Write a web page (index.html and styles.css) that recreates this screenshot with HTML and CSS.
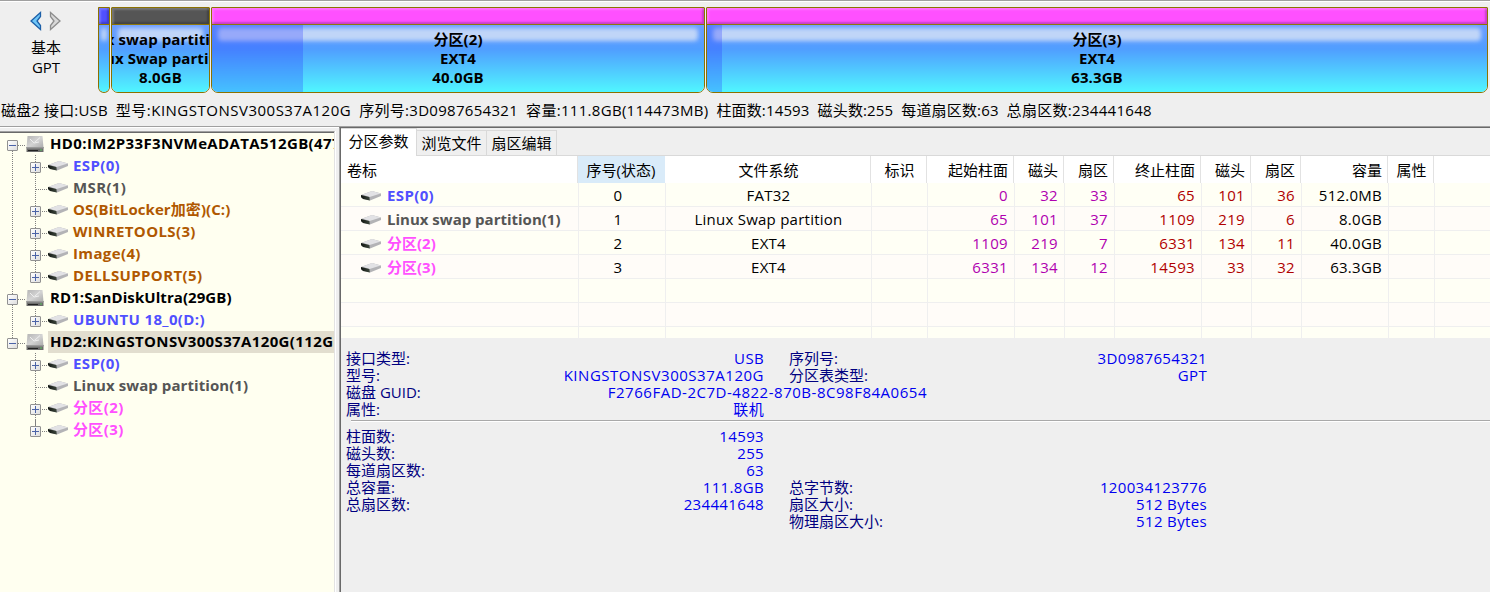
FILE: index.html
```html
<!DOCTYPE html>
<html lang="zh-CN">
<head>
    <meta charset="UTF-8">
    <title>磁盘分区管理</title>
    <link rel="stylesheet" href="styles.css">
</head>
<body>
    <!-- shared icons -->
    <svg class="defs" width="0" height="0">
        <defs>
            <linearGradient id="metal" x1="0" y1="0" x2="1" y2="1">
                <stop offset="0" stop-color="#b4b4b4"/>
                <stop offset="0.5" stop-color="#d4d4d4"/>
                <stop offset="1" stop-color="#aaaaaa"/>
            </linearGradient>
            <linearGradient id="side" x1="0" y1="0" x2="1" y2="0">
                <stop offset="0" stop-color="#111611"/>
                <stop offset="1" stop-color="#3c463c"/>
            </linearGradient>
            <symbol id="vol" viewBox="0 0 20 12">
                <path d="M0 5 L11 1 L20 3.5 L20 6 L9 10.5 L0 8 Z" fill="#b3b3b6"/>
                <path d="M1.5 4.4 L11 1 L19.7 3.5 L8.6 7 Z" fill="#e2e2e5"/>
                <path d="M0 5 L8.4 7 L8.8 10.5 L2 9 L0 7 Z" fill="url(#side)"/>
            </symbol>
            <symbol id="disk" viewBox="0 0 18 18">
                <path d="M1.5 1 H16.5 L17.5 13 H0.5 Z" fill="url(#metal)"/>
                <path d="M9 7 L14 2.5 M4 4 L8 8 L13 7" stroke="#eeeeee" stroke-width="1" fill="none"/>
                <path d="M0.5 12 H17.5 V17 H0.5 Z" fill="#6c6c6c"/>
                <path d="M0.5 12 H17.5 V13.5 H0.5 Z" fill="#9a9a9a"/>
                <path d="M2 15.5 H12" stroke="#222222"/>
                <path d="M14 15 H16" stroke="#59c45d"/>
            </symbol>
        </defs>
    </svg>

    <div class="top">
        <div class="disk-nav">
            <div class="arrows">
                <svg width="12" height="20" viewBox="0 0 12 20"><path d="M10.5 1.5 V5.5 L7 10 L10.5 14.5 V18.5 L1 10 Z" fill="#6fc6f8" stroke="#1c5fa8" stroke-width="1.3"/></svg>
                <svg width="12" height="20" viewBox="0 0 12 20"><path d="M1.5 1.5 V5.5 L5 10 L1.5 14.5 V18.5 L11 10 Z" fill="#d8d8d8" stroke="#8d8d8d" stroke-width="1.3"/></svg>
            </div>
            <div>基本</div>
            <div class="gpt">GPT</div>
        </div>
        <div class="bars">
            <div class="part esp"><div class="cap"></div><div class="body"></div></div>
            <div class="part swap"><div class="cap"></div><div class="body"><span>Linux swap partition(1)</span><span>Linux Swap partition</span><span>8.0GB</span></div></div>
            <div class="part p2"><div class="cap"></div><div class="body"><i class="used"></i><span>分区(2)</span><span>EXT4</span><span>40.0GB</span></div></div>
            <div class="part p3"><div class="cap"></div><div class="body"><i class="used"></i><span>分区(3)</span><span>EXT4</span><span>63.3GB</span></div></div>
        </div>
    </div>

    <div class="info">
        <span>磁盘2 接口:USB</span>
        <span class="model">型号:KINGSTONSV300S37A120G</span>
        <span class="wide">序列号:3D0987654321</span>
        <span class="wide">容量:111.8GB(114473MB)</span>
        <span>柱面数:14593</span>
        <span>磁头数:255</span>
        <span>每道扇区数:63</span>
        <span class="wide">总扇区数:234441648</span>
    </div>

    <div class="main">
        <div class="tree">
            <div class="node root first"><b class="box"></b><svg class="disk"><use href="#disk"/></svg><span>HD0:IM2P33F3NVMeADATA512GB(477GB)</span></div>
            <div class="node sub blue"><b class="box plus"></b><svg class="vol"><use href="#vol"/></svg><span>ESP(0)</span></div>
            <div class="node sub gray"><svg class="vol"><use href="#vol"/></svg><span>MSR(1)</span></div>
            <div class="node sub brown tight"><b class="box plus"></b><svg class="vol"><use href="#vol"/></svg><span>OS(BitLocker加密)(C:)</span></div>
            <div class="node sub brown"><b class="box plus"></b><svg class="vol"><use href="#vol"/></svg><span>WINRETOOLS(3)</span></div>
            <div class="node sub brown"><b class="box plus"></b><svg class="vol"><use href="#vol"/></svg><span>Image(4)</span></div>
            <div class="node sub brown end"><b class="box plus"></b><svg class="vol"><use href="#vol"/></svg><span>DELLSUPPORT(5)</span></div>
            <div class="node root tight"><b class="box"></b><svg class="disk"><use href="#disk"/></svg><span>RD1:SanDiskUltra(29GB)</span></div>
            <div class="node sub blue end"><b class="box plus"></b><svg class="vol"><use href="#vol"/></svg><span>UBUNTU 18_0(D:)</span></div>
            <div class="node root last selected"><b class="box"></b><svg class="disk"><use href="#disk"/></svg><span>HD2:KINGSTONSV300S37A120G(112GB)</span></div>
            <div class="node sub blue nl"><b class="box plus"></b><svg class="vol"><use href="#vol"/></svg><span>ESP(0)</span></div>
            <div class="node sub gray nl tight"><svg class="vol"><use href="#vol"/></svg><span>Linux swap partition(1)</span></div>
            <div class="node sub pink nl"><b class="box plus"></b><svg class="vol"><use href="#vol"/></svg><span>分区(2)</span></div>
            <div class="node sub pink nl end"><b class="box plus"></b><svg class="vol"><use href="#vol"/></svg><span>分区(3)</span></div>
        </div>

        <div class="content">
            <div class="tabs">
                <div class="tab active">分区参数</div>
                <div class="tab">浏览文件</div>
                <div class="tab">扇区编辑</div>
            </div>
            <div class="grid">
                <table>
                    <colgroup>
                        <col class="c1"><col class="c2"><col class="c3"><col class="c4"><col class="c5"><col class="c6"><col class="c6">
                        <col class="c5"><col class="c6"><col class="c6"><col class="c5"><col class="c7"><col>
                    </colgroup>
                    <thead>
                        <tr><th class="l">卷标</th><th class="sort">序号(状态)</th><th>文件系统</th><th>标识</th><th class="r">起始柱面</th><th class="r">磁头</th><th class="r">扇区</th><th class="r">终止柱面</th><th class="r">磁头</th><th class="r">扇区</th><th class="r">容量</th><th>属性</th><th></th></tr>
                    </thead>
                    <tbody>
                        <tr><td class="name blue"><svg class="vol"><use href="#vol"/></svg>ESP(0)</td><td class="no">0</td><td>FAT32</td><td></td><td class="start">0</td><td class="start">32</td><td class="start">33</td><td class="stop">65</td><td class="stop">101</td><td class="stop">36</td><td class="r">512.0MB</td><td></td><td></td></tr>
                        <tr><td class="name gray"><svg class="vol"><use href="#vol"/></svg>Linux swap partition(1)</td><td class="no">1</td><td>Linux Swap partition</td><td></td><td class="start">65</td><td class="start">101</td><td class="start">37</td><td class="stop">1109</td><td class="stop">219</td><td class="stop">6</td><td class="r">8.0GB</td><td></td><td></td></tr>
                        <tr><td class="name pink"><svg class="vol"><use href="#vol"/></svg>分区(2)</td><td class="no">2</td><td>EXT4</td><td></td><td class="start">1109</td><td class="start">219</td><td class="start">7</td><td class="stop">6331</td><td class="stop">134</td><td class="stop">11</td><td class="r">40.0GB</td><td></td><td></td></tr>
                        <tr><td class="name pink"><svg class="vol"><use href="#vol"/></svg>分区(3)</td><td class="no">3</td><td>EXT4</td><td></td><td class="start">6331</td><td class="start">134</td><td class="start">12</td><td class="stop">14593</td><td class="stop">33</td><td class="stop">32</td><td class="r">63.3GB</td><td></td><td></td></tr>
                        <tr><td></td><td></td><td></td><td></td><td></td><td></td><td></td><td></td><td></td><td></td><td></td><td></td><td></td></tr>
                        <tr><td></td><td></td><td></td><td></td><td></td><td></td><td></td><td></td><td></td><td></td><td></td><td></td><td></td></tr>
                        <tr><td></td><td></td><td></td><td></td><td></td><td></td><td></td><td></td><td></td><td></td><td></td><td></td><td></td></tr>
                    </tbody>
                </table>
            </div>
            <div class="detail">
                <div class="row"><label>接口类型:</label><em>USB</em><label>序列号:</label><em>3D0987654321</em></div>
                <div class="row"><label>型号:</label><em class="id">KINGSTONSV300S37A120G</em><label>分区表类型:</label><em>GPT</em></div>
                <div class="row guid"><label>磁盘 GUID:</label><em class="id">F2766FAD-2C7D-4822-870B-8C98F84A0654</em></div>
                <div class="row"><label>属性:</label><em>联机</em></div>
            </div>
            <div class="line"></div>
            <div class="detail second">
                <div class="row"><label>柱面数:</label><em>14593</em></div>
                <div class="row"><label>磁头数:</label><em>255</em></div>
                <div class="row"><label>每道扇区数:</label><em>63</em></div>
                <div class="row"><label>总容量:</label><em>111.8GB</em><label>总字节数:</label><em>120034123776</em></div>
                <div class="row"><label>总扇区数:</label><em>234441648</em><label>扇区大小:</label><em>512 Bytes</em></div>
                <div class="row"><label></label><em></em><label>物理扇区大小:</label><em>512 Bytes</em></div>
            </div>
        </div>
    </div>
</body>
</html>
```
FILE: styles.css
```css
* {
    box-sizing: border-box;
}
body {
    margin: 0;
    width: 1490px;
    height: 592px;
    overflow: hidden;
    background-color: #efefef;
    color: #000;
    font-family: "Open Sans", "Noto Sans CJK SC", sans-serif;
    font-size: 15px;
    line-height: 20px;
    white-space: nowrap;
    display: flex;
    flex-direction: column;
}
.defs {
    position: absolute;
}
.blue { color: #5050ff; }
.gray { color: #555; }
.brown { color: #b05800; }
.pink { color: #ff50ff; }

/* disk map */
.top {
    height: 99px;
    flex: none;
    display: flex;
    border-top: 1px solid #a0a0a0;
    box-shadow: inset 0 1px #fff;
}
.disk-nav {
    width: 98px;
    padding: 10px 6px 0 0;
    text-align: center;
}
.arrows {
    display: flex;
    justify-content: center;
    gap: 7px;
    height: 26px;
    margin-left: -2px;
}
.bars {
    display: flex;
    gap: 1px;
    padding-top: 6px;
}
.part {
    height: 86px;
    border: 1px solid #8c7200;
    border-radius: 1px 1px 7px 7px;
    overflow: hidden;
}
.esp { width: 12px; }
.swap { width: 99px; }
.p2 { width: 494px; }
.p3 { width: 782px; }
.cap {
    height: 17px;
    border-bottom: 1px solid #8c7200;
    background-color: #ff50ff;
    box-shadow: inset 2px 2px 2px rgba(255, 255, 255, 0.2), inset -2px -2px 2px rgba(0, 0, 0, 0.22);
}
.esp .cap { background-color: #5050ff; }
.swap .cap { background-color: #555; }
.body {
    position: relative;
    height: 67px;
    padding-top: 5px;
    background: linear-gradient(#6c9cff, #509eff 36%, #50f6ff);
    display: flex;
    flex-direction: column;
    align-items: center;
    font-weight: bold;
    line-height: 19px;
    letter-spacing: 0.1px;
}
.body::before {
    content: "";
    position: absolute;
    left: 6px;
    right: 6px;
    top: 3px;
    height: 13px;
    border-radius: 4px;
    background-color: rgba(205, 221, 247, 0.88);
    filter: blur(2px);
}
.esp .body::before {
    left: 2px;
    right: 2px;
}
.body span {
    position: relative;
}
.used {
    position: absolute;
    left: 0;
    top: 0;
    bottom: 0;
    width: 91px;
    background-color: rgba(40, 50, 255, 0.27);
}
.p3 .used {
    width: 15px;
}

.info {
    flex: none;
    height: 28px;
    padding: 1px 0 0 1px;
    display: flex;
    gap: 8px;
    border-bottom: 1px solid #a0a0a0;
    letter-spacing: 0.15px;
}
.info .wide {
    letter-spacing: 0.3px;
}
.info .model {
    letter-spacing: 0.5px;
}

.main {
    flex: 1;
    display: flex;
    min-height: 0;
    box-shadow: inset 0 1px #fff;
}

/* tree */
.tree {
    width: 335px;
    margin: 4px 4px 0 0;
    padding-top: 1px;
    border-top: 1px solid #a0a0a0;
    border-right: 1px solid #e3e3e3;
    background: linear-gradient(#696969, #696969) top / 100% 1px no-repeat #fffff0;
    box-shadow: 1px 0 #fff;
    overflow: hidden;
    font-weight: bold;
    letter-spacing: 0.37px;
}
.tight {
    letter-spacing: 0.07px;
}
.node {
    position: relative;
    height: 22px;
    display: flex;
    align-items: center;
}
.node span {
    height: 22px;
    line-height: 20px;
    padding-left: 5px;
}
.root span {
    flex: 1;
    padding-left: 2px;
    margin-left: 4px;
}
.selected span {
    background-color: #e2decf;
}
.box {
    position: absolute;
    left: 7px;
    top: 7px;
    width: 11px;
    height: 11px;
    border: 1px solid #919191;
    border-radius: 1px;
    background: linear-gradient(#4b63a7, #4b63a7) center / 7px 1px no-repeat, linear-gradient(135deg, #fff, #dedede);
}
.plus {
    left: 30px;
    background: linear-gradient(#4b63a7, #4b63a7) center / 7px 1px no-repeat, linear-gradient(#4b63a7, #4b63a7) center / 1px 7px no-repeat, linear-gradient(135deg, #fff, #dedede);
}
.root .disk {
    width: 18px;
    height: 18px;
    flex: none;
    margin-left: 26px;
}
.vol {
    width: 20px;
    height: 12px;
    flex: none;
}
.node .vol {
    margin-left: 48px;
    margin-bottom: 1px;
}
/* dotted guides */
.node::before, .node::after {
    content: "";
    position: absolute;
}
.node::before {
    left: 12px;
    top: 0;
    width: 1px;
    height: 22px;
    background: repeating-linear-gradient(#808080 0 1px, transparent 1px 2px);
}
.node.first::before { top: 12px; height: 10px; }
.node.last::before { height: 12px; }
.node.sub::before {
    width: 24px;
    background: repeating-linear-gradient(#808080 0 1px, transparent 1px 2px) left / 1px 22px no-repeat, repeating-linear-gradient(#808080 0 1px, transparent 1px 2px) right / 1px 22px no-repeat;
}
.node.end::before {
    background: repeating-linear-gradient(#808080 0 1px, transparent 1px 2px) left / 1px 22px no-repeat, repeating-linear-gradient(#808080 0 1px, transparent 1px 2px) right top / 1px 12px no-repeat;
}
.node.nl::before {
    left: 35px;
    width: 1px;
}
.node.nl.end::before {
    height: 12px;
}
.node::after {
    left: 18px;
    top: 12px;
    width: 7px;
    height: 1px;
    background: repeating-linear-gradient(90deg, #808080 0 1px, transparent 1px 2px);
}
.node.sub::after {
    left: 36px;
    width: 12px;
}
.node .box {
    z-index: 1;
}

/* right side */
.content {
    flex: 1;
    min-width: 0;
    padding-left: 1px;
    border-left: 1px solid #a0a0a0;
    border-top: 1px solid #696969;
    background: linear-gradient(#696969, #696969) left / 1px 100% no-repeat;
}
.tabs {
    height: 28px;
    display: flex;
    align-items: flex-end;
    border-bottom: 1px solid #d9d9d9;
}
.tab {
    width: 70px;
    height: 25px;
    padding-top: 2px;
    text-align: center;
    border: 1px solid #d9d9d9;
    border-left: none;
    border-bottom: none;
}
.tab.active {
    width: 76px;
    height: 28px;
    margin-bottom: -1px;
    padding-top: 2px;
    background-color: #fff;
}
.grid {
    height: 182px;
    overflow: hidden;
    background-color: #fff;
}
table {
    width: 1200px;
    table-layout: fixed;
    border-collapse: separate;
    border-spacing: 0;
}
.c1 { width: 238px; }
.c2 { width: 87px; }
.c3 { width: 206px; }
.c4 { width: 56px; }
.c5 { width: 87px; }
.c6 { width: 50px; }
.c7 { width: 46px; }
th, td {
    padding: 0 6px;
    text-align: center;
    border-right: 1px solid #efefef;
}
th {
    height: 27px;
    padding: 1px 5px 0 7px;
    font-weight: normal;
    border-right-color: #e2e2e2;
    position: relative;
    left: -1px;
}
th.l {
    text-align: left;
}
th.sort {
    padding: 1px 6px 0;
    background-color: #d9ebf9;
    border-right-color: #d9ebf9;
}
td {
    height: 24px;
    border-bottom: 1px solid #efefef;
    background-color: #fffff5;
    letter-spacing: 0.25px;
}
tr:nth-child(even) td {
    background-color: #fffcf8;
}
.r, td.start, td.stop {
    text-align: right;
}
td.no {
    padding-right: 14px;
}
.start { color: #b000b0; }
.stop { color: #b00000; }
td.start, td.stop {
    letter-spacing: 0.35px;
}
td.name {
    padding-left: 20px;
    text-align: left;
    font-weight: bold;
    letter-spacing: 0;
}
td.blue {
    letter-spacing: 0.37px;
}
td .vol {
    margin-right: 6px;
    vertical-align: -1px;
}

/* parameters */
.detail {
    padding: 12px 0 0 5px;
    height: 82px;
    line-height: 17px;
    color: #000080;
}
.line {
    height: 2px;
    margin-left: 10px;
    border-top: 1px solid #a9a9a9;
    border-bottom: 1px solid #fff;
}
.second {
    padding-top: 6px;
}
.row {
    height: 17px;
    display: grid;
    grid-template-columns: 130px 288px 156px 287px;
}
.row label:nth-of-type(2) {
    padding-left: 25px;
}
.row em {
    font-style: normal;
    text-align: right;
    letter-spacing: 0.35px;
    color: #0000f0;
}
.row .id {
    letter-spacing: 0.52px;
}
.guid {
    grid-template-columns: 130px 451px;
}
```
